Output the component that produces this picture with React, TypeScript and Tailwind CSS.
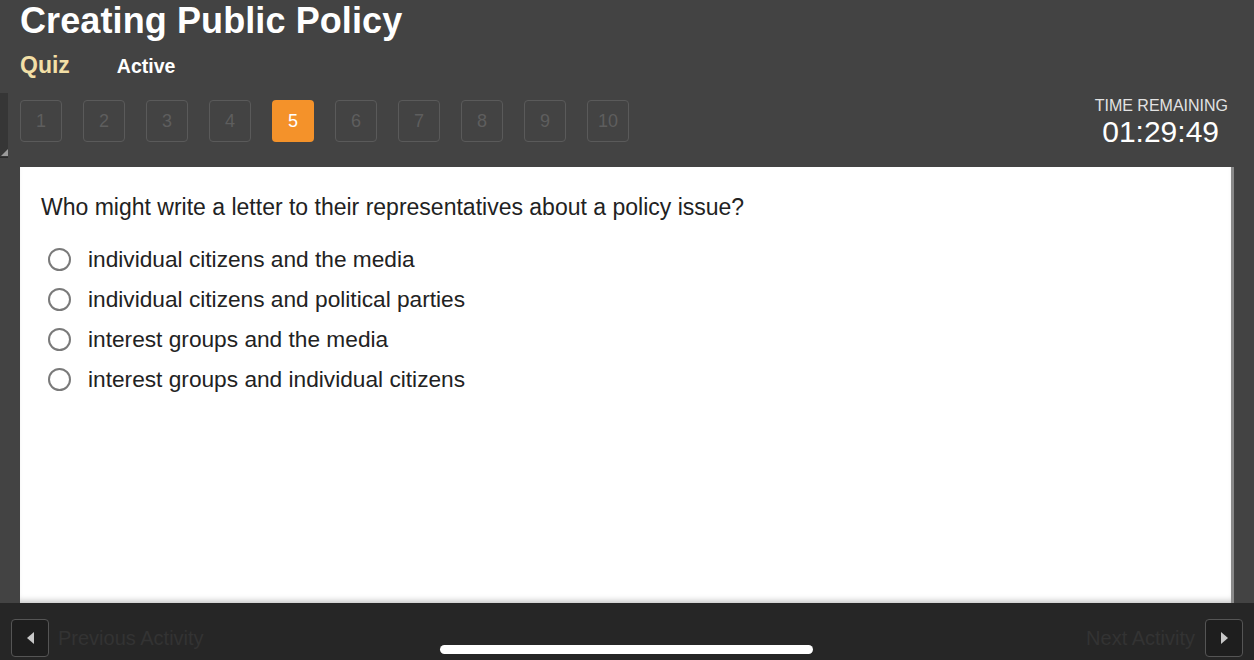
import React from 'react';

const questions = [1, 2, 3, 4, 5, 6, 7, 8, 9, 10];
const current = 5;

const options = [
  'individual citizens and the media',
  'individual citizens and political parties',
  'interest groups and the media',
  'interest groups and individual citizens',
];

const App: React.FC = () => {
  return (
    <div
      className="relative w-[1254px] h-[660px] overflow-hidden bg-[#434343] flex flex-col"
      style={{ fontFamily: '"Liberation Sans", Arial, sans-serif' }}
    >
      {/* Header */}
      <div className="px-5 pt-[1px]">
        <h1 className="text-[36px] leading-[40px] font-bold text-white tracking-[0.1px]">
          Creating Public Policy
        </h1>
        <div className="flex items-baseline mt-[7px] h-[26px]">
          <span className="text-[23px] font-bold text-[#f2dfa6]">Quiz</span>
          <span className="ml-[47px] text-[19.5px] font-bold text-white">Active</span>
        </div>
      </div>

      {/* Question nav + timer */}
      <div className="relative flex items-start mt-[18px] h-[75px]">
        <div className="absolute left-0 top-[1px] w-[8px] h-[65px] bg-[#363636] border-b border-[#2a2a2a]">
          <div className="absolute bottom-[1px] right-0 w-0 h-0 border-l-[7px] border-l-transparent border-b-[7px] border-b-[#9a9a9a]" />
        </div>
        <div className="flex gap-[21px] pl-5 pt-[8px]">
          {questions.map((n) => (
            <div
              key={n}
              className={`w-[42px] h-[42px] rounded-[4px] flex items-center justify-center text-[18px] ${
                n === current
                  ? 'bg-[#f4922a] text-white'
                  : 'border border-[#5a5a5a] text-[#5e5e5e]'
              }`}
            >
              {n}
            </div>
          ))}
        </div>
        <div className="ml-auto mr-[26px] flex flex-col items-end pt-[5px]">
          <span className="text-[16px] leading-[18px] text-[#e2e2e2]">TIME REMAINING</span>
          <span className="text-[30px] leading-[34px] text-white mr-[9px]">01:29:49</span>
        </div>
      </div>

      {/* Content panel */}
      <div className="flex flex-1 pl-5 pr-5">
        <div className="flex-1 bg-white border-r-[3px] border-[#8a8a8a] shadow-[inset_0_-6px_6px_-4px_rgba(0,0,0,0.25)] pl-[21px] pt-[27px]">
          <p className="text-[23px] leading-[26px] text-[#222]">
            Who might write a letter to their representatives about a policy issue?
          </p>
          <div className="flex flex-col gap-[14px] mt-[26px] pl-[7px]">
            {options.map((o) => (
              <label key={o} className="flex items-center h-[26px]">
                <span className="w-[23px] h-[23px] rounded-full border-[2px] border-[#7a7a7a] bg-white" />
                <span className="ml-[17px] text-[22.7px] text-[#222]">{o}</span>
              </label>
            ))}
          </div>
        </div>
      </div>

      {/* Footer */}
      <div className="h-[57px] bg-[#262626] flex items-center px-[11px] pt-[12px]">
        <div className="w-[38px] h-[38px] rounded-[4px] border border-[#555] bg-[#1e1e1e] flex items-center justify-center">
          <div className="w-0 h-0 border-y-[6px] border-y-transparent border-r-[7px] border-r-[#c8c8c8]" />
        </div>
        <span className="ml-[9px] text-[20px] text-[#333]">Previous Activity</span>
        <span className="ml-auto mr-[10px] text-[20px] text-[#333]">Next Activity</span>
        <div className="w-[38px] h-[38px] rounded-[4px] border border-[#555] bg-[#1e1e1e] flex items-center justify-center">
          <div className="w-0 h-0 border-y-[6px] border-y-transparent border-l-[7px] border-l-[#c8c8c8]" />
        </div>
      </div>

      {/* Home indicator */}
      <div className="absolute left-[440px] top-[645px] w-[373px] h-[9px] rounded-full bg-white" />
    </div>
  );
};

export default App;
